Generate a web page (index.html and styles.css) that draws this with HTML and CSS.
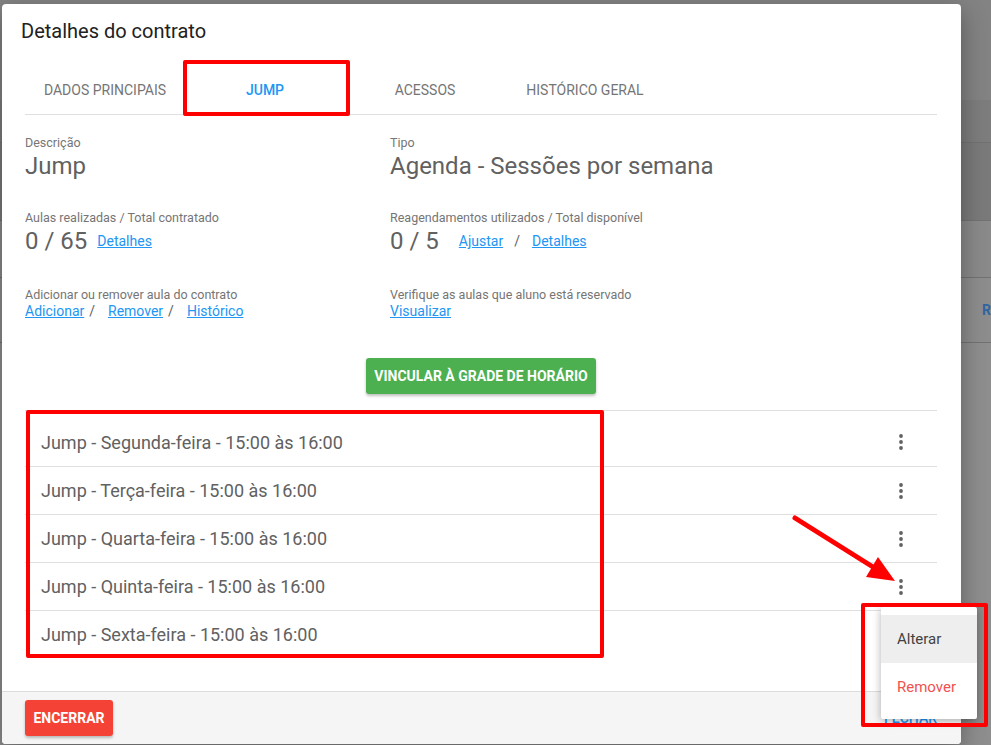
FILE: index.html
```html
<!DOCTYPE html>
<html>
    <head>
        <title>Detalhes do contrato</title>
        <link rel="stylesheet" href="styles.css">
    </head>
    <body>
        <div class="page">
            <div class="page__row page__row--a"></div>
            <div class="page__row page__row--b"></div>
            <div class="page__row page__row--c"></div>
            <div class="page__row page__row--d"><span class="page__link">R</span></div>
            <div class="page__row page__row--e"></div>
        </div>

        <div class="modal">
            <h2 class="modal__title">Detalhes do contrato</h2>

            <div class="modal__body">
                <div class="tabs">
                    <div class="tabs__item">Dados principais</div>
                    <div class="tabs__item tabs__item--active">Jump</div>
                    <div class="tabs__item">Acessos</div>
                    <div class="tabs__item">Histórico geral</div>
                </div>

                <div class="fields">
                    <div class="field">
                        <div class="field__label">Descrição</div>
                        <div class="field__value">Jump</div>
                    </div>
                    <div class="field">
                        <div class="field__label">Tipo</div>
                        <div class="field__value">Agenda - Sessões por semana</div>
                    </div>
                    <div class="field">
                        <div class="field__label">Aulas realizadas / Total contratado</div>
                        <div class="field__value">0 / 65<a href="#" class="link link--raised link--first">Detalhes</a></div>
                    </div>
                    <div class="field">
                        <div class="field__label">Reagendamentos utilizados / Total disponível</div>
                        <div class="field__value">0 / 5<a href="#" class="link link--raised link--wide">Ajustar</a><span class="sep sep--even">/</span><a href="#" class="link link--raised">Detalhes</a></div>
                    </div>
                    <div class="field">
                        <div class="field__label">Adicionar ou remover aula do contrato</div>
                        <div class="field__links"><a href="#" class="link">Adicionar</a><span class="sep">/</span><a href="#" class="link">Remover</a><span class="sep">/</span><a href="#" class="link">Histórico</a></div>
                    </div>
                    <div class="field">
                        <div class="field__label">Verifique as aulas que aluno está reservado</div>
                        <div class="field__links"><a href="#" class="link">Visualizar</a></div>
                    </div>
                </div>

                <div class="actions">
                    <button class="btn btn--green">Vincular à grade de horário</button>
                </div>

                <ul class="schedule">
                    <li class="schedule__item">
                        <span>Jump - Segunda-feira - 15:00 às 16:00</span>
                        <button class="kebab"><svg viewBox="0 0 24 24"><circle cx="12" cy="6" r="1.9"/><circle cx="12" cy="12" r="1.9"/><circle cx="12" cy="18" r="1.9"/></svg></button>
                    </li>
                    <li class="schedule__item">
                        <span>Jump - Terça-feira - 15:00 às 16:00</span>
                        <button class="kebab"><svg viewBox="0 0 24 24"><circle cx="12" cy="6" r="1.9"/><circle cx="12" cy="12" r="1.9"/><circle cx="12" cy="18" r="1.9"/></svg></button>
                    </li>
                    <li class="schedule__item">
                        <span>Jump - Quarta-feira - 15:00 às 16:00</span>
                        <button class="kebab"><svg viewBox="0 0 24 24"><circle cx="12" cy="6" r="1.9"/><circle cx="12" cy="12" r="1.9"/><circle cx="12" cy="18" r="1.9"/></svg></button>
                    </li>
                    <li class="schedule__item">
                        <span>Jump - Quinta-feira - 15:00 às 16:00</span>
                        <button class="kebab"><svg viewBox="0 0 24 24"><circle cx="12" cy="6" r="1.9"/><circle cx="12" cy="12" r="1.9"/><circle cx="12" cy="18" r="1.9"/></svg></button>
                    </li>
                    <li class="schedule__item">
                        <span>Jump - Sexta-feira - 15:00 às 16:00</span>
                        <button class="kebab"><svg viewBox="0 0 24 24"><circle cx="12" cy="6" r="1.9"/><circle cx="12" cy="12" r="1.9"/><circle cx="12" cy="18" r="1.9"/></svg></button>
                    </li>
                </ul>
            </div>

            <div class="modal__footer">
                <button class="btn btn--red">Encerrar</button>
                <button class="btn btn--flat">Fechar</button>
            </div>
        </div>

        <!-- dropdown opened from the 4th row -->
        <ul class="menu">
            <li class="menu__item menu__item--hover">Alterar</li>
            <li class="menu__item menu__item--danger">Remover</li>
        </ul>

        <!-- red annotations -->
        <div class="mark mark--tab"></div>
        <div class="mark mark--list"></div>
        <div class="mark mark--menu"></div>
        <svg class="arrow" viewBox="0 0 130 100">
            <line x1="15" y1="18" x2="93" y2="67" stroke="#ff0000" stroke-width="5" stroke-linecap="round"/>
            <polygon points="115,81 86,77 98,57" fill="#ff0000"/>
        </svg>
    </body>
</html>
```

FILE: styles.css
```css
* {
  box-sizing: border-box;
  margin: 0;
  padding: 0;
}

body {
  width: 991px;
  height: 745px;
  overflow: hidden;
  position: relative;
  font-family: Roboto, "Liberation Sans", sans-serif;
  background-color: #838383;
}

/* page behind the overlay */
.page {
  display: flex;
  flex-direction: column;
  height: 100%;
  padding-top: 100px;
}

.page__row {
  border-bottom: 1px solid #727272;
}

.page__row--a {
  height: 43px;
  background-color: #7d7d7d;
}

.page__row--b {
  height: 78px;
  background-color: #7a7a7a;
}

.page__row--c {
  height: 57px;
  background-color: #8a8a8a;
}

.page__row--d {
  height: 65px;
  background-color: #8d8d8d;
  display: flex;
  align-items: center;
  padding-left: 982px;
}

.page__row--e {
  flex: 1;
  background-color: #8e8e8e;
  border-bottom: none;
}

.page__link {
  color: #2f66a0;
  font-weight: 700;
  font-size: 14px;
}

/* modal */
.modal {
  position: absolute;
  left: 2px;
  top: 4px;
  width: 959px;
  height: 740px;
  background-color: #fff;
  border-radius: 4px;
  box-shadow: 0 8px 24px rgba(0, 0, 0, 0.35);
  display: flex;
  flex-direction: column;
  overflow: hidden;
}

.modal__title {
  font-size: 20px;
  font-weight: 400;
  line-height: 24px;
  color: #212121;
  padding: 15px 0 0 19px;
}

.modal__body {
  padding: 0 24px 0 23px;
}

.tabs {
  display: flex;
  margin-top: 23px;
  height: 49px;
  border-bottom: 1px solid #e0e0e0;
}

.tabs__item {
  width: 160px;
  display: flex;
  align-items: center;
  justify-content: center;
  font-size: 14px;
  text-transform: uppercase;
  color: #757575;
}

.tabs__item--active {
  color: #2196f3;
  font-weight: 500;
}

.fields {
  display: grid;
  grid-template-columns: 365px 1fr;
  row-gap: 29px;
  padding-top: 20px;
}

.field:nth-child(n+5) {
  margin-top: 2px;
}

.field__label {
  font-size: 12.5px;
  line-height: 16px;
  color: #757575;
}

.field__value {
  font-size: 24px;
  line-height: 30px;
  height: 30px;
  color: #616161;
}

.field__links {
  font-size: 14px;
  line-height: 16px;
  color: #616161;
}

.link {
  color: #2196f3;
  font-size: 14px;
  line-height: 16px;
  text-decoration: underline;
}

.link--raised {
  vertical-align: 3px;
}

.link--first {
  margin-left: 10px;
}

.link--wide {
  margin-left: 20px;
}

.sep {
  font-size: 14px;
  line-height: 16px;
  color: #616161;
  margin: 0 13px 0 5px;
}

.sep--even {
  margin: 0 12px 0 11px;
  vertical-align: 3px;
}

.actions {
  display: flex;
  justify-content: center;
  margin-top: 39px;
}

.btn {
  height: 36px;
  min-width: 88px;
  padding: 0 8px;
  border: none;
  border-radius: 3px;
  font-family: inherit;
  font-size: 14px;
  font-weight: 700;
  text-transform: uppercase;
  color: #fff;
  cursor: pointer;
}

.btn--green {
  background-color: #4caf50;
  box-shadow: 0 2px 3px rgba(0, 0, 0, 0.25);
}

.btn--red {
  background-color: #f44336;
  box-shadow: 0 2px 3px rgba(0, 0, 0, 0.25);
}

.btn--flat {
  background: none;
  min-width: 0;
  padding: 0;
  color: #2196f3;
  font-weight: 500;
}

.schedule {
  list-style: none;
  margin-top: 16px;
  padding-top: 7px;
  border-top: 1px solid #e0e0e0;
}

.schedule__item {
  height: 48px;
  display: flex;
  align-items: center;
  justify-content: space-between;
  padding: 0 24px 0 16px;
  font-size: 18px;
  color: #616161;
}

.schedule__item + .schedule__item {
  border-top: 1px solid #e0e0e0;
}

.kebab {
  width: 24px;
  height: 24px;
  border: none;
  background: none;
  display: flex;
}

.kebab svg {
  width: 24px;
  height: 24px;
  fill: #616161;
}

.modal__footer {
  margin-top: auto;
  display: flex;
  justify-content: space-between;
  padding: 8px 24px 8px 23px;
  background-color: #f5f5f5;
  border-top: 1px solid #dcdcdc;
}

/* dropdown */
.menu {
  position: absolute;
  left: 881px;
  top: 607px;
  width: 96px;
  padding: 8px 0;
  list-style: none;
  background-color: #fff;
  box-shadow: 0 2px 8px rgba(0, 0, 0, 0.3);
  border-radius: 2px;
}

.menu__item {
  height: 48px;
  display: flex;
  align-items: center;
  padding-left: 16px;
  font-size: 15px;
  color: #424242;
}

.menu__item--hover {
  background-color: #eeeeee;
}

.menu__item--danger {
  color: #ef5350;
}

/* annotations */
.mark {
  position: absolute;
  border: 4px solid #ff0000;
  border-radius: 2px;
}

.mark--tab {
  left: 183px;
  top: 60px;
  width: 167px;
  height: 56px;
}

.mark--list {
  left: 26px;
  top: 410px;
  width: 578px;
  height: 248px;
}

.mark--menu {
  left: 861px;
  top: 603px;
  width: 127px;
  height: 124px;
}

.arrow {
  position: absolute;
  left: 780px;
  top: 500px;
  width: 130px;
  height: 100px;
}
```
